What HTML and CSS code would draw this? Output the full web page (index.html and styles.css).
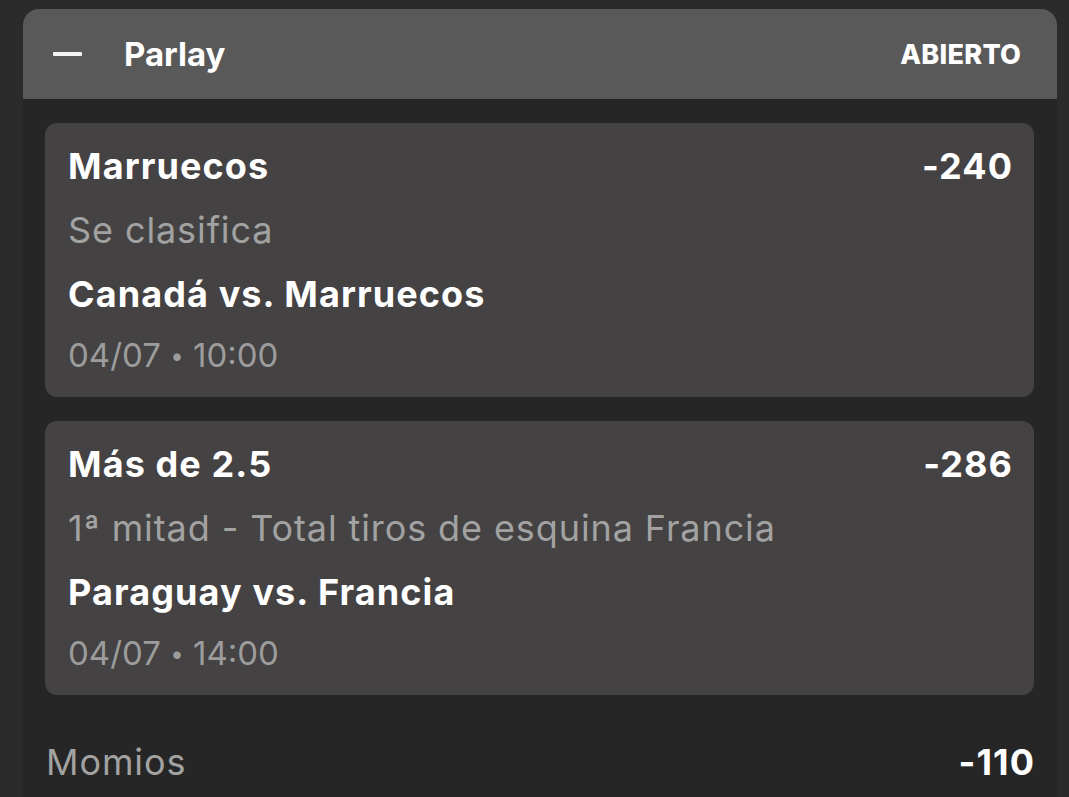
FILE: index.html
```html
<!DOCTYPE html>
<html lang="es">
<head>
<meta charset="utf-8">
<title>Parlay</title>
<link rel="stylesheet" href="styles.css">
</head>
<body>
<div class="page">
  <section class="slip">
    <header class="slip-head">
      <span class="collapse" aria-hidden="true"></span>
      <h1 class="slip-title">Parlay</h1>
      <span class="status">ABIERTO</span>
    </header>
    <div class="slip-body">
      <article class="leg">
        <div class="leg-row">
          <span class="pick">Marruecos</span>
          <span class="odds">-240</span>
        </div>
        <div class="market">Se clasifica</div>
        <div class="match">Canadá vs. Marruecos</div>
        <div class="when">04/07 <span class="dot">•</span> 10:00</div>
      </article>
      <article class="leg">
        <div class="leg-row">
          <span class="pick">Más de 2.5</span>
          <span class="odds">-286</span>
        </div>
        <div class="market">1ª mitad - Total tiros de esquina Francia</div>
        <div class="match">Paraguay vs. Francia</div>
        <div class="when">04/07 <span class="dot">•</span> 14:00</div>
      </article>
      <div class="total">
        <span class="total-label">Momios</span>
        <span class="total-odds">-110</span>
      </div>
    </div>
  </section>
</div>
</body>
</html>
```
FILE: styles.css
```css
* { box-sizing: border-box; margin: 0; padding: 0; }

html, body {
  width: 1069px;
  height: 797px;
  overflow: hidden;
  background: #2b2b2b;
  font-family: Inter, "Noto Sans", sans-serif;
  color: #ffffff;
}

.page {
  padding: 9px 12px 0 23px;
}

.slip {
  background: #262626;
  border-radius: 16px 16px 0 0;
  height: 788px;
}

.slip-head {
  display: flex;
  align-items: center;
  height: 90px;
  padding: 0 36px 0 30px;
  background: #595959;
  border-radius: 16px 16px 0 0;
}

.collapse {
  width: 29px;
  height: 4px;
  background: #f4f4f4;
  border-radius: 1px;
  margin-right: 42px;
}

.slip-title {
  font-size: 33px;
  font-weight: 700;
  flex: 1;
}

.status {
  font-size: 27px;
  font-weight: 800;
  letter-spacing: 0.3px;
  margin-right: -0.3px;
}

.slip-body {
  display: flex;
  flex-direction: column;
  gap: 24px;
  padding: 24px 23px 0 22px;
}

.leg {
  background: #444243;
  border-radius: 12px;
  height: 274px;
  padding: 18px 22px 0 23px;
}

.leg-row {
  display: flex;
  justify-content: space-between;
  align-items: baseline;
}

.pick, .odds {
  font-size: 36px;
  font-weight: 700;
  line-height: 50px;
  letter-spacing: 1.1px;
}

.odds {
  margin-right: -1.1px;
}

.market {
  font-size: 36px;
  color: #a2a2a2;
  line-height: 50px;
  margin-top: 14px;
  letter-spacing: 0.9px;
}

.match {
  font-size: 36px;
  font-weight: 700;
  line-height: 50px;
  margin-top: 14px;
  letter-spacing: 1.1px;
}

.when {
  font-size: 33px;
  color: #9c9c9c;
  line-height: 50px;
  margin-top: 11px;
}

.when .dot {
  font-size: 24px;
  vertical-align: 3px;
}

.total {
  display: flex;
  justify-content: space-between;
  align-items: baseline;
  padding: 21px 0 0 1px;
}

.total-label {
  font-size: 36px;
  color: #a2a2a2;
  letter-spacing: 0.9px;
}

.total-odds {
  font-size: 36px;
  font-weight: 700;
  letter-spacing: 1.1px;
  margin-right: -1.1px;
}
```
